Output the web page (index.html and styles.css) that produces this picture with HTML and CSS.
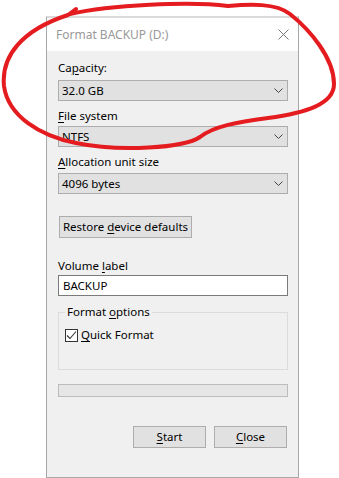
FILE: index.html
```html
<!DOCTYPE html>
<html lang="en">
<head>
    <meta charset="UTF-8">
    <meta name="viewport" content="width=device-width, initial-scale=1.0">
    <title>Format BACKUP (D:)</title>
    <link rel="stylesheet" href="styles.css">
</head>
<body>
    <div class="dialog">
        <div class="titlebar">
            <span class="title">Format BACKUP (D:)</span>
            <svg class="close-x" width="11" height="11" viewBox="0 0 11 11">
                <path d="M0.5 0.5 L10.5 10.5 M10.5 0.5 L0.5 10.5" stroke="#777" stroke-width="1" fill="none"/>
            </svg>
        </div>

        <div class="content">
            <div class="label first">Ca<u>p</u>acity:</div>
            <div class="combo">
                <span>32.0 GB</span>
                <svg class="chevron" width="9" height="5" viewBox="0 0 9 5"><path d="M0.5 0.5 L4.5 4.5 L8.5 0.5" stroke="#444" fill="none"/></svg>
            </div>

            <div class="label"><u>F</u>ile system</div>
            <div class="combo">
                <span>NTFS</span>
                <svg class="chevron" width="9" height="5" viewBox="0 0 9 5"><path d="M0.5 0.5 L4.5 4.5 L8.5 0.5" stroke="#444" fill="none"/></svg>
            </div>

            <div class="label alloc"><u>A</u>llocation unit size</div>
            <div class="combo">
                <span>4096 bytes</span>
                <svg class="chevron" width="9" height="5" viewBox="0 0 9 5"><path d="M0.5 0.5 L4.5 4.5 L8.5 0.5" stroke="#444" fill="none"/></svg>
            </div>

            <button class="btn restore">Restore <u>d</u>evice defaults</button>

            <div class="label volume">Volume <u>l</u>abel</div>
            <div class="textbox">BACKUP</div>

            <fieldset class="group">
                <legend>Format <u>o</u>ptions</legend>
                <div class="check-row">
                    <span class="checkbox">
                        <svg width="11" height="11" viewBox="0 0 11 11"><path d="M1 5.5 L4 8.5 L10 1.5" stroke="#333" stroke-width="1.1" fill="none"/></svg>
                    </span>
                    <span><u>Q</u>uick Format</span>
                </div>
            </fieldset>

            <div class="progress"></div>

            <div class="actions">
                <button class="btn action"><u>S</u>tart</button>
                <button class="btn action"><u>C</u>lose</button>
            </div>
        </div>
    </div>

    <!-- red marker circle drawn over the dialog -->
    <svg class="scribble" width="339" height="478" viewBox="0 0 339 478">
        <path d="M70 14 C 110 5, 190 1, 228 6 C 250 4, 276 3, 290 14 C 310 30, 334 58, 334 84 C 334 104, 306 113, 268 118 C 238 122, 214 126, 200 137 C 184 148, 120 152, 76 143 C 40 136, 8 116, 4 86 C 1 56, 22 30, 68 15 L 76 9" stroke="#e51c1f" stroke-width="4" fill="none" stroke-linecap="round" stroke-linejoin="round"/>
    </svg>
</body>
</html>
```

FILE: styles.css
```css
body {
    margin: 0;
    background: #fff;
    font-family: "Noto Sans", "Open Sans", sans-serif;
    font-size: 11.5px;
    color: #000;
    position: relative;
    width: 339px;
    height: 478px;
    overflow: hidden;
}

u {
    text-decoration-thickness: 1px;
    text-underline-offset: 2px;
}

.dialog {
    box-sizing: border-box;
    width: 253px;
    height: 462px;
    margin: 16px 0 0 46px;
    border: 1px solid #a8a8a8;
    border-top: 2px solid #dadada;
    background: #f0f0f0;
}

/* title bar */
.titlebar {
    height: 33px;
    background: #fff;
    display: flex;
    align-items: center;
    justify-content: space-between;
    padding: 0 9px 0 9px;
}

.title {
    color: #999;
    font-size: 12px;
    line-height: 16px;
    margin-top: 1px;
}

/* dialog body */
.content {
    padding: 9px 10px 0 11px;
}

.label {
    line-height: 16px;
    margin-top: 7px;
    margin-bottom: 2px;
}

.label.first {
    margin-top: 0;
    margin-bottom: 4px;
}

.label.alloc {
    margin-bottom: 3px;
}

.label.volume {
    margin-top: 20px;
    margin-bottom: 1px;
}

.combo {
    box-sizing: border-box;
    height: 21px;
    width: 230px;
    background: #e1e1e1;
    border: 1px solid #adadad;
    display: flex;
    align-items: center;
    justify-content: space-between;
    padding: 0 4px 0 3px;
    line-height: 16px;
}

.btn {
    box-sizing: border-box;
    height: 22px;
    background: #e1e1e1;
    border: 1px solid #adadad;
    font-family: inherit;
    font-size: 11.5px;
    color: #000;
    padding: 0;
    line-height: 16px;
}

.restore {
    display: block;
    width: 133px;
    margin: 22px 0 0 1px;
}

.textbox {
    box-sizing: border-box;
    height: 21px;
    width: 230px;
    background: #fff;
    border: 1px solid #7a7a7a;
    padding: 0 4px;
    line-height: 19px;
}

/* format options group */
.group {
    box-sizing: border-box;
    width: 230px;
    height: 66px;
    margin: 8px 0 0 0;
    padding: 7px 6px 0 6px;
    border: 1px solid #dcdcdc;
    min-width: 0;
}

.group legend {
    padding: 0 2px;
    margin-left: 0;
    line-height: 16px;
}

.check-row {
    display: flex;
    align-items: center;
    gap: 3px;
    line-height: 16px;
}

.checkbox {
    box-sizing: border-box;
    width: 13px;
    height: 13px;
    border: 1px solid #333;
    background: #fff;
    display: flex;
    align-items: center;
    justify-content: center;
}

.progress {
    box-sizing: border-box;
    width: 230px;
    height: 13px;
    margin-top: 14px;
    background: #e6e6e6;
    border: 1px solid #bcbcbc;
}

.actions {
    display: flex;
    justify-content: flex-end;
    gap: 8px;
    width: 229px;
    margin-top: 29px;
}

.action {
    width: 73px;
}

.scribble {
    position: absolute;
    top: 0;
    left: 0;
    pointer-events: none;
}
```
